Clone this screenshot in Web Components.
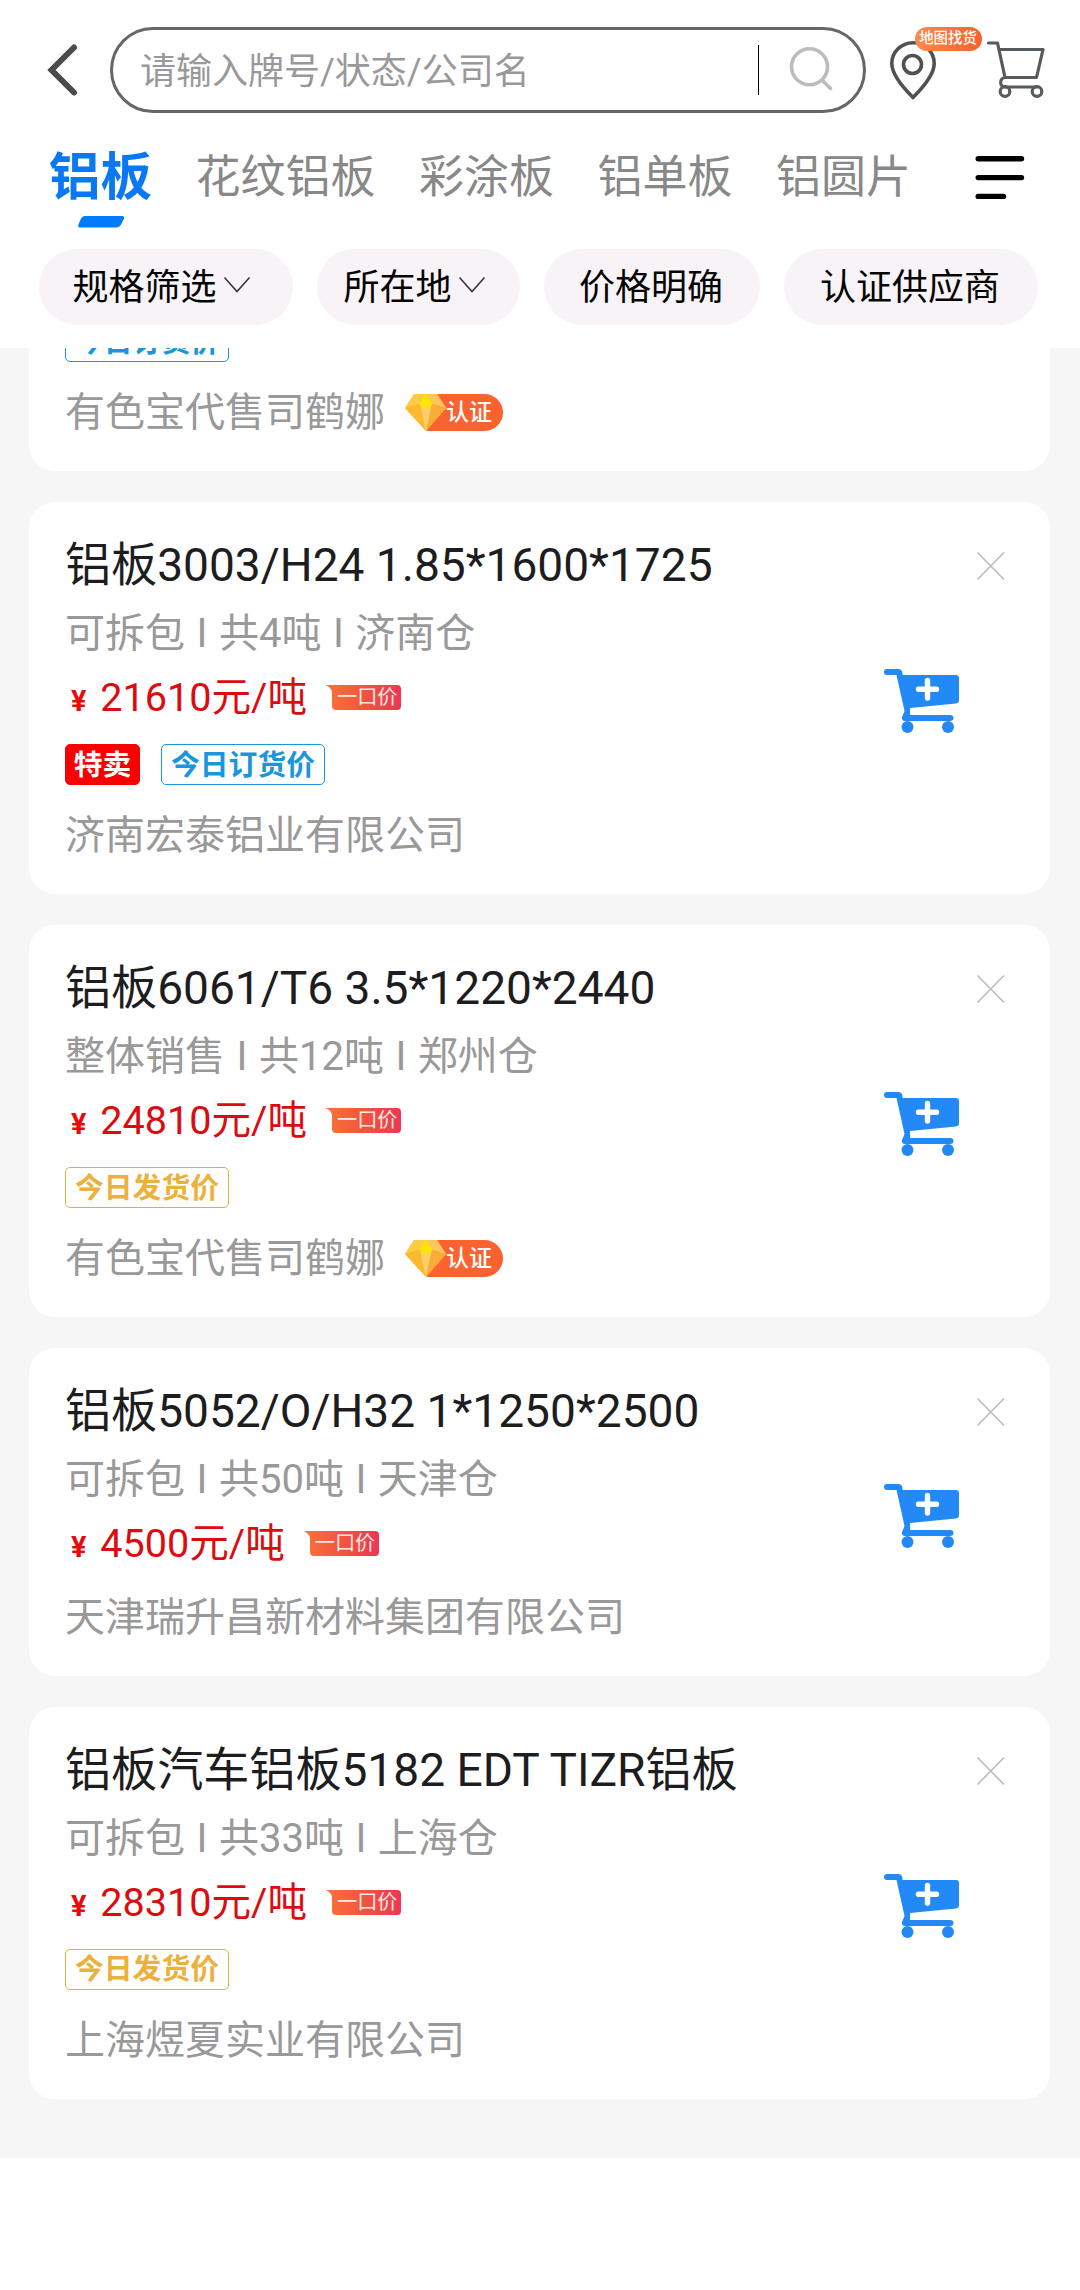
<!DOCTYPE html>
<html lang="zh-CN">
<head>
<meta charset="utf-8">
<title>铝板</title>
<style>
html,body{margin:0;padding:0;background:#fff}
body{width:1080px;height:2290px;overflow:hidden;font-family:Roboto,"Noto Sans CJK SC",sans-serif;color:#1d1d1f}
</style>
</head>
<body>
<metal-app></metal-app>
<script>
class Base extends HTMLElement{
  connectedCallback(){
    if(this.shadowRoot)return;
    this.attachShadow({mode:'open'}).innerHTML='<style>*{box-sizing:border-box}svg{display:block}'+this.css()+'</style>'+this.html();
  }
  css(){return ':host{display:block}'}
  html(){return '<slot></slot>'}
}

customElements.define('search-box',class extends Base{
  css(){return `:host{display:flex;align-items:center;box-sizing:border-box;width:756px;height:86px;border:3px solid #666;border-radius:43px;padding-left:27px}
  span{flex:1;padding-top:4px;font-size:36px;line-height:48px;color:#999;white-space:nowrap}
  i{width:1px;height:50px;background:#000;margin-right:29px}
  svg{margin-right:29px}`}
  html(){return `<span><slot></slot></span><i></i><svg width="46" height="50" viewBox="0 0 46 50" fill="none" stroke="#bcbcbc" stroke-width="3.6" stroke-linecap="round"><circle cx="21.5" cy="21.8" r="18"/><path d="M35 36 42.500 43.500"/></svg>`}
});

customElements.define('map-finder',class extends Base{
  css(){return `:host{display:block;position:relative;width:48px;height:60px}
  b{position:absolute;left:26px;top:-13px;width:67px;height:24px;border-radius:12px;background:linear-gradient(90deg,#fb8b4e,#f6612c);color:#fff;font:500 14.400px/24px Roboto,"Noto Sans CJK SC",sans-serif;text-align:center;white-space:nowrap}`}
  html(){return `<svg width="48" height="60" viewBox="0 0 48 60" fill="none" stroke="#505252" stroke-width="3.600" stroke-linejoin="round"><path d="M24 57.500C15 48.500 2.800 35 2.800 23.500A21.200 20.800 0 0 1 45.200 23.500C45.200 35 33 48.500 24 57.500Z"/><circle cx="23.500" cy="24.500" r="9"/></svg><b><slot></slot></b>`}
});

customElements.define('top-bar',class extends Base{
  css(){return `:host{display:flex;align-items:center;height:140px;padding-left:44px}
  search-box{margin-left:30px}
  map-finder{margin:0 0 0 22.500px}
  .cart{margin-left:49px}`}
  html(){return `<svg width="36" height="56" viewBox="0 0 36 56" fill="none" stroke="#4b4b4b" stroke-width="6" stroke-linecap="round" stroke-linejoin="miter"><path d="M30 5.500 7.500 28 30 50.500"/></svg>
  <search-box>请输入牌号/状态/公司名</search-box>
  <map-finder>地图找货</map-finder>
  <svg class="cart" width="60" height="60" viewBox="0 0 60 60" fill="none" stroke="#585b5d" stroke-width="3.200" stroke-linejoin="round" stroke-linecap="round"><path d="M2.500 3H11.500L19 37.500H50.500L57 9.500H13M19 37.500C13.500 38 13 46.500 19 47H50"/><circle cx="19" cy="51.500" r="4.800"/><circle cx="51" cy="51.500" r="4.800"/></svg>`}
});

customElements.define('category-tab',class extends Base{
  css(){return `:host{display:flex;flex-direction:column;align-items:center;font-size:45px;line-height:64px;color:#888;white-space:nowrap;height:90px}
  :host([active]){font-size:51.500px;font-weight:700;color:#0a78f5}
  svg{display:none;margin-top:6px}
  :host([active]) svg{display:block}`}
  html(){return `<span><slot></slot></span><svg width="48" height="12" viewBox="0 0 48 12"><path fill="#007aff" d="M8 0H45Q48 0 47 2.500L44 8.500Q42.500 11.500 39 11.500H3Q.5 11.500 1.500 8.500L3.500 3.500Q5 0 8 0Z"/></svg>`}
});
customElements.define('category-bar',class extends Base{
  css(){return `:host{display:flex;align-items:flex-start;height:109px;padding:6px 0 0 49px;gap:43.500px}
  .menu{margin:7.500px 0 0 20px}`}
  html(){return `<category-tab active>铝板</category-tab><category-tab>花纹铝板</category-tab><category-tab>彩涂板</category-tab><category-tab>铝单板</category-tab><category-tab>铝圆片</category-tab>
  <svg class="menu" width="50" height="46" viewBox="0 0 50 46" stroke="#000" stroke-width="5.400" stroke-linecap="round"><path d="M3.200 4.700H46.500M3.200 23.600H46.500M3.200 42.400H28.500"/></svg>`}
});

customElements.define('filter-chip',class extends Base{
  css(){return `:host{display:flex;align-items:center;justify-content:center;box-sizing:border-box;height:76px;border-radius:38px;background:#f7f3f7;color:#050505;font-size:36px;line-height:48px;padding-top:2px;white-space:nowrap}
  svg{display:none;margin:-6px 0 0 6px}
  :host([drop]) svg{display:block}`}
  html(){return `<slot></slot><svg width="28" height="18" viewBox="0 0 28 18" fill="none" stroke="#333" stroke-width="1.500"><path d="M1.500 1.500 14 15.500 26.500 1.500"/></svg>`}
});
customElements.define('filter-bar',class extends Base{
  css(){return `:host{display:flex;gap:24px;height:99px;padding-left:39px}
  .a{width:254px;padding-right:9px}.b{width:203px;padding-right:8px}.c{width:216px;padding-right:2px}.d{width:254px;padding-right:2px}`}
  html(){return `<filter-chip class="a" drop>规格筛选</filter-chip><filter-chip class="b" drop>所在地</filter-chip><filter-chip class="c">价格明确</filter-chip><filter-chip class="d">认证供应商</filter-chip>`}
});

customElements.define('offer-tag',class extends Base{
  css(){return `:host{display:flex;align-items:center;justify-content:center;box-sizing:border-box;height:41px;padding:0 8.600px;border:1.440px solid currentColor;border-radius:5px;color:#1a96dc;font-size:28.800px;font-weight:700;line-height:40px;white-space:nowrap}
  :host([kind=order]){width:164px}
  :host([kind=ship]){color:#ecb13c;width:164px;border-color:#dcb23e}
  :host([kind=sale]){background:#fb0000;border-color:#fb0000;color:#fff;width:75px}`}
});

customElements.define('fixed-price',class extends Base{
  css(){return `:host{display:grid;width:75px;height:25px}
  svg,span{grid-area:1/1}
  span{padding-left:11px;color:#ffe9e4;font-size:20.200px;line-height:25px;white-space:nowrap}`}
  html(){return `<svg width="75" height="25" viewBox="0 0 75 25"><defs><linearGradient id="g"><stop stop-color="#f97338"/><stop offset=".5" stop-color="#f2553f"/><stop offset="1" stop-color="#ee3653"/></linearGradient></defs><path fill="url(#g)" d="M0 0H71Q75 0 75 4V21Q75 25 71 25H10Q6 25 6 21V8Q6 3 0 0Z"/></svg><span>一口价</span>`}
});

customElements.define('verified-badge',class extends Base{
  css(){return `:host{display:grid;width:98px;height:37px}
  svg,span{grid-area:1/1}
  span{padding-left:41px;color:#fff;font-size:23px;font-weight:500;line-height:38px;white-space:nowrap}`}
  html(){return `<svg width="98" height="37" viewBox="0 0 98 37"><path fill="#fb6230" d="M22 0H79.500A18.500 18.500 0 0 1 79.500 37H22Z"/><path fill="#fdc046" d="M9 0H32L41 14 21 37 0 14Z"/><path fill="#fdcb45" d="M9 0 0 14 15 9.500 20.500 0Z"/><path fill="#fdc65c" d="M32 0 41 14 27 9.500 20.500 0Z"/><path fill="#fcb92f" d="M0 14 15 9.500 21 37Z"/><path fill="#fdd06c" d="M15 9.500H27L21 37Z"/><path fill="#f9ac38" d="M27 9.500 41 14 21 37Z"/><path fill="#ffe600" d="M20.500 0 27.500 10 21 15 14.500 10Z"/></svg><span>认证</span>`}
});

customElements.define('cart-add',class extends Base{
  html(){return `<svg width="76" height="66" viewBox="0 0 76 66"><path fill="#2389f7" d="M3 1H14Q18 1 18.500 5V7H72Q75 7 75 10V32Q75 35 72 35.500L26 40V47H66Q69.500 47 69.500 50T66 53H21Q17.500 53 18 49L20.500 43 12.500 7H3Q0 7 0 4T3 1Z"/><circle cx="23.500" cy="59" r="6" fill="#2389f7"/><circle cx="64" cy="59" r="6" fill="#2389f7"/><path d="M43.500 12.500V30M34.500 21.300H52.500" stroke="#fff" stroke-width="5.400" stroke-linecap="round"/></svg>`}
});

customElements.define('product-card',class extends Base{
  css(){return `:host{display:flex;justify-content:space-between;box-sizing:border-box;width:1020.500px;background:#fff;border-radius:26px;padding:31px 0 34px 36px}
  .title{font-size:46.080px;line-height:64px;color:#1d1d1f;white-space:nowrap}
  .info{margin-top:13px;font-size:40px;line-height:48px;color:#999;white-space:pre;word-spacing:1.600px}
  .price{display:flex;align-items:baseline;height:48px;margin-top:16px;padding-left:6px;color:#dc0b10;font-size:39.600px;line-height:48px;white-space:pre}
  .price b{font-size:28.800px;color:#e80b0b;margin-right:4px}
  fixed-price{align-self:center;margin:-1px 0 0 19px}
  .tags{display:flex;gap:21px;margin-top:22px}
  .seller{display:flex;align-items:center;height:48px;margin-top:26px;font-size:40px;line-height:48px;color:#999;white-space:nowrap}
  .tags + .seller{margin-top:27px}
  verified-badge{margin:-2px 0 0 20px}
  .side{display:flex;flex-direction:column;align-items:flex-end;width:165px}
  .x{margin:18px 44px 0 0}
  cart-add{margin:auto 90px 0 0}
  .side.full cart-add{margin-bottom:126px}.side.short cart-add{margin-bottom:93px}
  :host([partial]){padding-top:0;margin-top:-27px;border-radius:0 0 26px 26px}
  :host([partial]) .tags{margin-top:0}`}
  html(){
    const a=n=>this.getAttribute(n)||'';
    const tags=a('tags').split(' ').filter(Boolean);
    const names={order:'今日订货价',ship:'今日发货价',sale:'特卖'};
    const partial=this.hasAttribute('partial');
    return `<div class="main">${partial?'':`<div class="title">${a('name')}</div><div class="info">${a('info')}</div><div class="price"><b>¥</b><span> ${a('price')}元/吨</span><fixed-price></fixed-price></div>`}
    ${tags.length?`<div class="tags">${tags.map(t=>`<offer-tag kind="${t}">${names[t]}</offer-tag>`).join('')}</div>`:''}
    <div class="seller"><span><slot></slot></span>${this.hasAttribute('verified')?'<verified-badge></verified-badge>':''}</div></div>
    ${partial?'':`<div class="side ${tags.length?'full':'short'}"><svg class="x" width="30" height="30" viewBox="0 0 30 30" stroke="#bdbdbd" stroke-width="1.700"><path d="M1.500 1.500 28 28.500M28 1.500 1.500 28.500"/></svg><cart-add></cart-add></div>`}`}
});

customElements.define('product-list',class extends Base{
  css(){return `:host{display:flex;flex-direction:column;gap:31px;box-sizing:border-box;height:1810px;overflow:hidden;background:#f6f6f6;padding-left:29px}
  ::slotted(product-card){flex:none}
  ::slotted(product-card:last-child){margin-top:-.5px}`}
});

customElements.define('metal-app',class extends Base{
  css(){return `:host{display:block;width:1080px}`}
  html(){return `<top-bar></top-bar><category-bar></category-bar><filter-bar></filter-bar>
  <product-list>
  <product-card partial tags="order" verified>有色宝代售司鹤娜</product-card>
  <product-card name="铝板3003/H24 1.85*1600*1725" info="可拆包 I 共4吨 I 济南仓" price="21610" tags="sale order">济南宏泰铝业有限公司</product-card>
  <product-card name="铝板6061/T6 3.5*1220*2440" info="整体销售 I 共12吨 I 郑州仓" price="24810" tags="ship" verified>有色宝代售司鹤娜</product-card>
  <product-card name="铝板5052/O/H32 1*1250*2500" info="可拆包 I 共50吨 I 天津仓" price="4500">天津瑞升昌新材料集团有限公司</product-card>
  <product-card name="铝板汽车铝板5182 EDT TIZR铝板" info="可拆包 I 共33吨 I 上海仓" price="28310" tags="ship">上海煜夏实业有限公司</product-card>
  </product-list>`}
});
</script>
</body>
</html>
